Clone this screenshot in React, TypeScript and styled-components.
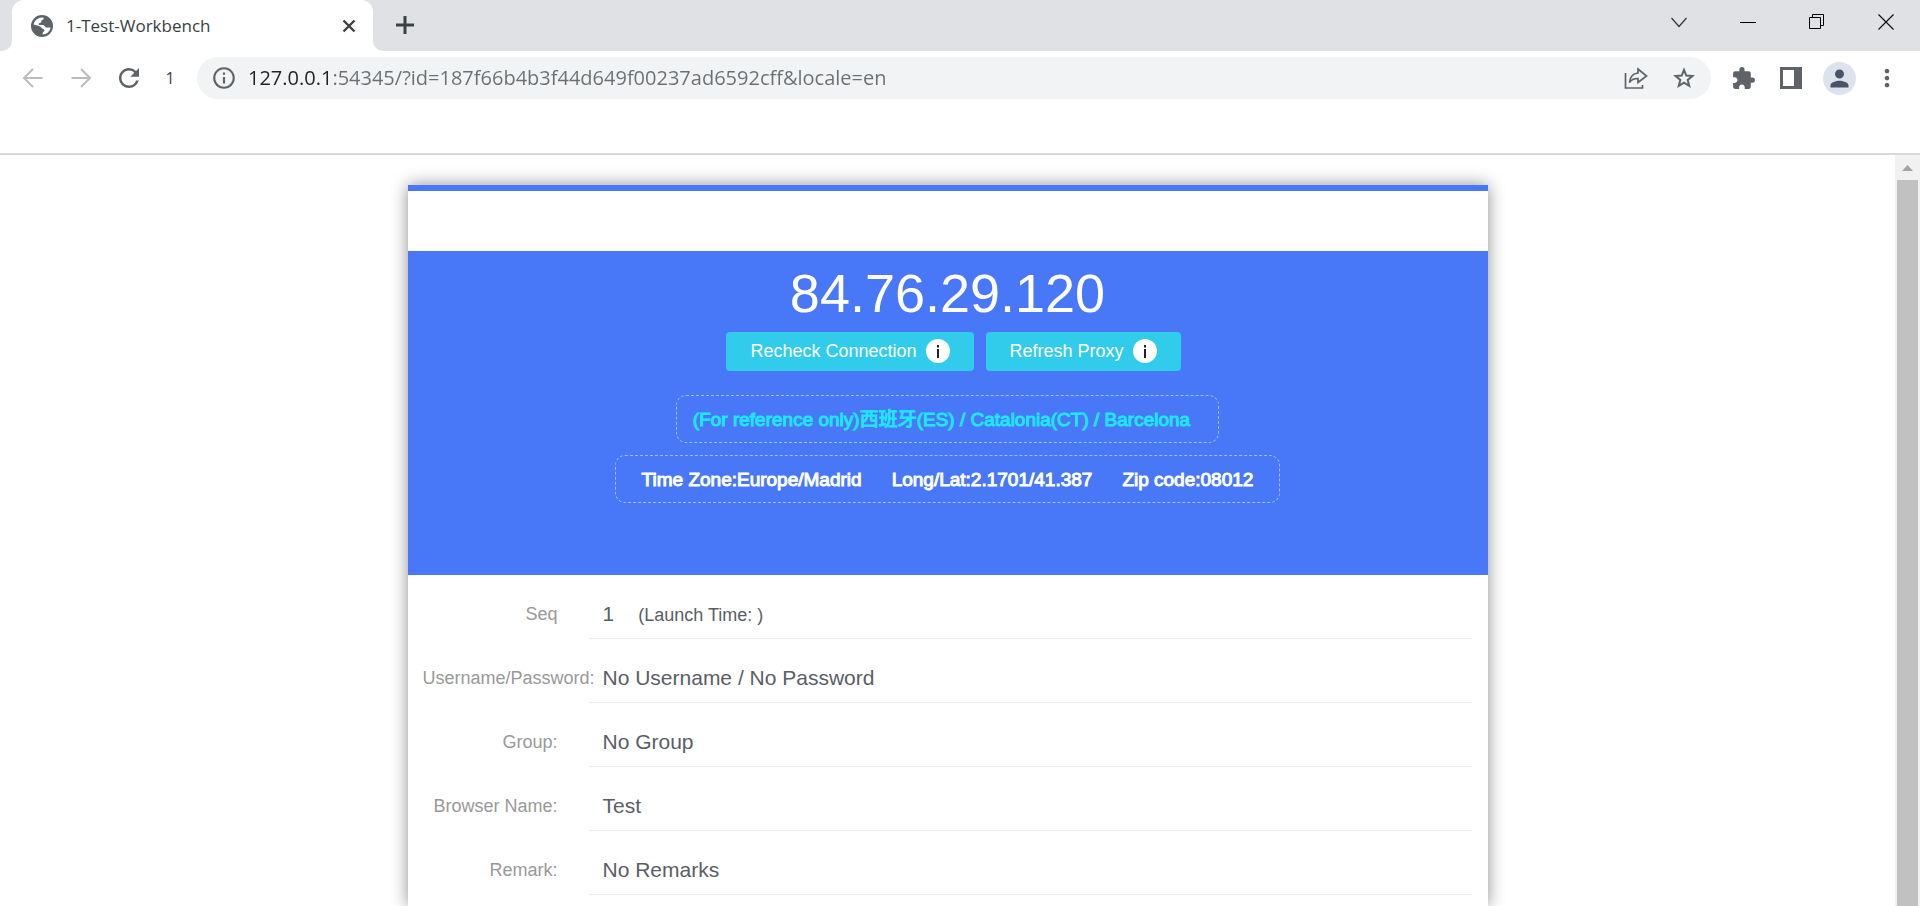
import React from "react";
import styled, { createGlobalStyle } from "styled-components";
import { MdInfoOutline, MdRefresh, MdExtension, MdPerson, MdMoreVert } from "react-icons/md";

const Global = createGlobalStyle`
  * { box-sizing: border-box; }
  html, body { margin: 0; height: 100%; overflow: hidden; background: #fff; }
  #root { height: 100%; }
  button { border: 0; margin: 0; padding: 0; background: none; font: inherit; color: inherit; cursor: pointer; }
`;

const uiFont = `"Open Sans", "Noto Sans", sans-serif`;
const pageFont = `"Liberation Sans", "Noto Sans CJK SC", Arial, sans-serif`;

const Window = styled.div`
  display: flex;
  flex-direction: column;
  height: 100vh;
  font-family: ${uiFont};
`;

const TabStrip = styled.header`
  display: flex;
  flex: none;
  height: 51px;
  background: #dfe1e5;
`;

const StripEdge = styled.div<{ $side: "left" | "right" }>`
  width: 12px;
  background: #fff;
  &::before {
    content: "";
    display: block;
    height: 100%;
    background: #dfe1e5;
    border-radius: ${(p) => (p.$side === "left" ? "0 0 10px 0" : "0 0 0 10px")};
  }
`;

const TabBack = styled.div`
  width: 361px;
  background: #dfe1e5;
`;

const Tab = styled.div`
  display: flex;
  align-items: center;
  height: 100%;
  padding: 0 12px 0 17px;
  background: #fff;
  border-radius: 12px 12px 0 0;
  color: #3c4043;
`;

const TabTitle = styled.span`
  flex: 1;
  margin-left: 11px;
  font-size: 17px;
  line-height: 24px;
`;

const IconButton = styled.button<{ $size?: number }>`
  display: flex;
  flex: none;
  align-items: center;
  justify-content: center;
  width: ${(p) => p.$size ?? 48}px;
  height: ${(p) => p.$size ?? 48}px;
`;

const NewTab = styled(IconButton)`
  margin: 5px 0 0 0;
`;

const WindowControls = styled.div`
  display: flex;
  margin-left: auto;
`;

const WindowButton = styled.button`
  display: flex;
  align-items: center;
  justify-content: center;
  width: 69px;
  height: 43px;
`;

const Toolbar = styled.nav`
  display: flex;
  flex: none;
  align-items: center;
  height: 54px;
  padding: 0 9px;
  color: #5f6368;
`;

const ProfileMark = styled.span`
  width: 34px;
  margin-right: 10px;
  text-align: center;
  font-size: 16px;
  color: #3c4043;
`;

const AddressBar = styled.form`
  display: flex;
  flex: 1;
  align-items: center;
  height: 42px;
  margin-right: 8px;
  padding: 0 3px 0 14px;
  border-radius: 21px;
  background: #f1f3f4;
`;

const AddressInput = styled.input`
  flex: 1;
  min-width: 0;
  margin-left: 11px;
  padding: 0;
  border: 0;
  outline: 0;
  font: 20px/28px ${uiFont};
  color: #5f6368;
  background: linear-gradient(90deg, #202124 84px, #6b6f73 84px);
  -webkit-background-clip: text;
  background-clip: text;
  -webkit-text-fill-color: transparent;
`;

const Avatar = styled.span`
  display: flex;
  align-items: center;
  justify-content: center;
  width: 33px;
  height: 33px;
  border-radius: 50%;
  background: #dde3ec;
  color: #4b5368;
`;

const BookmarksBar = styled.div`
  flex: none;
  height: 50px;
  border-bottom: 2px solid #d8d8d8;
`;

const Viewport = styled.div`
  display: flex;
  flex: 1;
  min-height: 0;
`;

const Page = styled.main`
  flex: 1;
  min-width: 0;
  overflow: hidden;
  padding: 30px 20px 0;
  font-family: ${pageFont};
`;

const Scrollbar = styled.div`
  display: flex;
  flex-direction: column;
  align-items: center;
  flex: none;
  width: 25px;
  background: #f1f1f1;
`;

const ScrollThumb = styled.div`
  flex: 1;
  width: 21px;
  background: #c1c1c1;
`;

const Card = styled.article`
  max-width: 1080px;
  min-height: 100%;
  margin: 0 auto;
  border-top: 6px solid #4878f8;
  padding-top: 60px;
  box-shadow: 0 0 16px rgba(0, 0, 0, 0.45);
`;

const Hero = styled.section`
  display: flex;
  flex-direction: column;
  align-items: center;
  padding: 11px 20px 60px;
  background: #4878f8;
  color: #fff;
`;

const IpAddress = styled.h1`
  margin: 0;
  font-size: 54px;
  font-weight: 400;
  line-height: 62px;
`;

const Actions = styled.div`
  display: flex;
  margin: 8px 0 24px;
`;

const ActionButton = styled.button`
  display: flex;
  align-items: center;
  gap: 9px;
  height: 39px;
  margin-left: 12px;
  padding: 0 24px 2px;
  border-radius: 4px;
  background: #31ccec;
  font-size: 18px;
  line-height: 24px;
`;

const InfoBox = styled.div<{ $accent?: boolean }>`
  display: flex;
  gap: 30px;
  height: 48px;
  margin-bottom: 12px;
  padding: ${(p) => (p.$accent ? "0 28px 0 16px" : "0 26px")};
  border: 1px dashed rgba(255, 255, 255, 0.5);
  border-radius: 10px;
  font-size: 19px;
  line-height: 48px;
  color: ${(p) => (p.$accent ? "#1fe6fb" : "#fff")};
  -webkit-text-stroke: 1px currentColor;
  white-space: nowrap;
`;

const Fields = styled.dl`
  margin: 0;
`;

const Field = styled.div`
  display: flex;
  height: 64px;
  padding: 0 16px 0 15px;
`;

const FieldLabel = styled.dt`
  display: flex;
  justify-content: flex-end;
  flex: none;
  width: 166px;
  padding-right: 31px;
  font-size: 18px;
  line-height: 78px;
  color: #999;
  white-space: nowrap;
`;

const WideLabel = styled(FieldLabel)`
  justify-content: flex-start;
  padding-right: 0;
`;

const FieldValue = styled.dd`
  flex: 1;
  margin: 0;
  padding-left: 14px;
  border-bottom: 1px solid #ebebeb;
  font-size: 21px;
  line-height: 78px;
  color: #5a5e66;
`;

const LaunchTime = styled.span`
  margin-left: 24px;
  font-size: 18px;
`;

const GlobeIcon = () => (
  <svg width="22" height="22" viewBox="0 0 22 22" aria-hidden="true">
    <circle cx="11" cy="11" r="11" fill="#5f6368" />
    <path
      d="M2.600 9.500C3.500 5.500 7 2.800 11 2.600c1.500 0 2 .6 1.500 1.600l-2 1.300-.5 2-2.500 1 .5 1.500h4.500l2.500 2.500h4.500c-.5 3.800-3.700 6.900-8 7 .2-2 .3-2.500 2-3.500 0-1.500-1-2.500-2.500-2.500-1-2-2.500-2.500-4.500-3z"
      fill="#fff"
    />
  </svg>
);

const InfoDot = () => (
  <svg width="24" height="24" viewBox="0 0 24 24" aria-hidden="true">
    <circle cx="12" cy="12" r="12" fill="#fff" />
    <path d="M11 6h2v2.500h-2zM11 10h2v9h-2z" fill="#222" />
  </svg>
);

const Stroke = ({ d, size = 24, width = 2, color = "currentColor" }: { d: string; size?: number; width?: number; color?: string }) => (
  <svg width={size} height={size} viewBox="0 0 24 24" fill="none" stroke={color} strokeWidth={width} aria-hidden="true">
    <path d={d} />
  </svg>
);

const fields = [
  { label: "Group:", value: "No Group" },
  { label: "Browser Name:", value: "Test" },
  { label: "Remark:", value: "No Remarks" },
];

export default function App() {
  return (
    <Window>
      <Global />
      <TabStrip>
        <StripEdge $side="left" />
        <TabBack>
          <Tab>
            <IconButton as="span" $size={26}>
              <GlobeIcon />
            </IconButton>
            <TabTitle>1-Test-Workbench</TabTitle>
            <IconButton $size={24} aria-label="Close tab">
              <Stroke d="M6.500 6.500l11 11M17.500 6.500l-11 11" width={2.4} />
            </IconButton>
          </Tab>
        </TabBack>
        <StripEdge $side="right" />
        <NewTab $size={40} aria-label="New tab">
          <Stroke d="M12 3v18M3 12h18" width={3} color="#3c4043" />
        </NewTab>
        <WindowControls>
          <WindowButton aria-label="Search tabs">
            <Stroke d="M4.500 8l7.500 8.500L19.500 8" width={1.2} color="#333" />
          </WindowButton>
          <WindowButton aria-label="Minimize">
            <Stroke d="M4 12.500h16" width={1} color="#000" />
          </WindowButton>
          <WindowButton aria-label="Restore">
            <Stroke d="M4.500 7.500h11v11h-11zM7.500 7v-2.500h11v11h-3" width={1} color="#000" />
          </WindowButton>
          <WindowButton aria-label="Close">
            <Stroke d="M4.500 4.500l15 15M19.500 4.500l-15 15" width={1.2} color="#111" />
          </WindowButton>
        </WindowControls>
      </TabStrip>

      <Toolbar>
        <IconButton aria-label="Back">
          <Stroke d="M21.500 12H3M12 3l-9 9 9 9" width={2} color="#babcbe" />
        </IconButton>
        <IconButton aria-label="Forward">
          <Stroke d="M2.500 12H21M12 3l9 9-9 9" width={2} color="#babcbe" />
        </IconButton>
        <IconButton aria-label="Reload">
          <MdRefresh size={30} />
        </IconButton>
        <ProfileMark>1</ProfileMark>
        <AddressBar>
          <MdInfoOutline size={26} />
          <AddressInput aria-label="Address" defaultValue="127.0.0.1:54345/?id=187f66b4b3f44d649f00237ad6592cff&locale=en" />
          <IconButton type="button" aria-label="Share">
            <Stroke
              d="M1.500 7v15h17v-3M14 3l8.500 7-8.500 6.500v-4c-4 0-7 1.500-8.500 4 .5-5.500 3.500-9 8.500-9.500z"
              width={1.7}
            />
          </IconButton>
          <IconButton type="button" aria-label="Bookmark">
            <Stroke
              d="M12 3.800l2.300 5.700 6.100.5-4.700 3.900 1.500 6-5.200-3.200-5.200 3.200 1.500-6L3.600 10l6.100-.5z"
              width={2}
            />
          </IconButton>
        </AddressBar>
        <IconButton aria-label="Extensions">
          <MdExtension size={25} />
        </IconButton>
        <IconButton aria-label="Side panel">
          <svg width="22" height="22" viewBox="0 0 22 22" aria-hidden="true">
            <path fillRule="evenodd" d="M0 0h22v22H0zM3 3v16h11V3z" fill="currentColor" />
          </svg>
        </IconButton>
        <IconButton aria-label="Profile">
          <Avatar>
            <MdPerson size={27} />
          </Avatar>
        </IconButton>
        <IconButton aria-label="Menu">
          <MdMoreVert size={28} />
        </IconButton>
      </Toolbar>
      <BookmarksBar />

      <Viewport>
        <Page>
          <Card>
            <Hero>
              <IpAddress>84.76.29.120</IpAddress>
              <Actions>
                <ActionButton>
                  Recheck Connection
                  <InfoDot />
                </ActionButton>
                <ActionButton>
                  Refresh Proxy
                  <InfoDot />
                </ActionButton>
              </Actions>
              <InfoBox $accent>(For reference only)西班牙(ES) / Catalonia(CT) / Barcelona</InfoBox>
              <InfoBox>
                <span>Time Zone:Europe/Madrid</span>
                <span>Long/Lat:2.1701/41.387</span>
                <span>Zip code:08012</span>
              </InfoBox>
            </Hero>
            <Fields>
              <Field>
                <FieldLabel>Seq</FieldLabel>
                <FieldValue>
                  1<LaunchTime>(Launch Time: )</LaunchTime>
                </FieldValue>
              </Field>
              <Field>
                <WideLabel>Username/Password:</WideLabel>
                <FieldValue>No Username / No Password</FieldValue>
              </Field>
              {fields.map((f) => (
                <Field key={f.label}>
                  <FieldLabel>{f.label}</FieldLabel>
                  <FieldValue>{f.value}</FieldValue>
                </Field>
              ))}
            </Fields>
          </Card>
        </Page>
        <Scrollbar aria-hidden="true">
          <svg width="25" height="25" viewBox="0 0 25 25">
            <path d="M7 16l5.500-6 5.500 6z" fill="#a3a3a3" />
          </svg>
          <ScrollThumb />
        </Scrollbar>
      </Viewport>
    </Window>
  );
}
